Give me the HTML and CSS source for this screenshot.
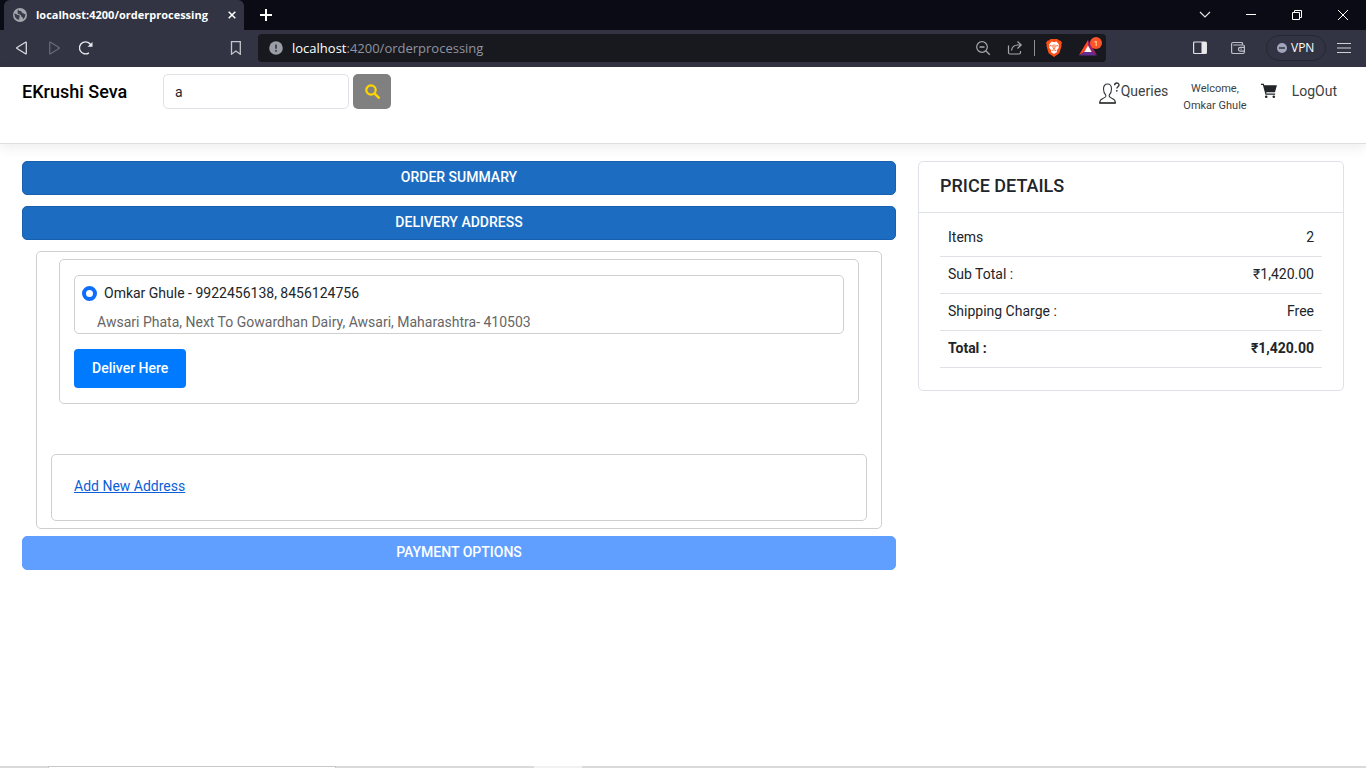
FILE: index.html
```html
<!DOCTYPE html>
<html lang="en">
<head>
<meta charset="utf-8">
<title>localhost:4200/orderprocessing</title>
<link rel="stylesheet" href="styles.css">
</head>
<body>
<div class="browser">
  <div class="tabstrip">
    <div class="tab">
      <svg class="tab-icon" width="14" height="14" viewBox="0 0 14 14"><circle cx="7" cy="7" r="7" fill="#a4a6ad"/><path d="M1.5 5.5c1.8.2 2.500 1.300 3.800 1.500 1.500.2 1.800 1 1.200 2-.4.8 0 1.600-.4 2.800C3.200 11.500 1.200 9 1.500 5.500zM5.500 1.500c.1 1.300 1 1.500 2.200 1.600 1.200.2.600 1.700 1.900 1.900 1 .1 1.200 1.200 2.800 1 .2 2-.8 4-2.400 5.300.2-1.500-.5-1.900-1.400-2.500-.8-.700-.3-2-1.600-2.300C5.600 6.200 4 5.500 4.600 4.200 5 3.500 3.800 3 5.500 1.500z" fill="#3a3c4a"/></svg>
      <span class="tab-title">localhost:4200/orderprocessing</span>
      <button class="icon-btn" aria-label="Close tab"><svg width="8" height="8" viewBox="0 0 8 8"><path d="M.7.7l6.600 6.600M7.300.7L.7 7.300" stroke="#fff" stroke-width="1.500"/></svg></button>
    </div>
    <button class="icon-btn new-tab" aria-label="New tab"><svg width="12" height="12" viewBox="0 0 12 12"><path d="M6 0v12M0 6h12" stroke="#fff" stroke-width="2"/></svg></button>
    <div class="window-controls">
      <button class="icon-btn" aria-label="Search tabs"><svg width="12" height="12" viewBox="0 0 12 12"><path d="M1 3l5 5 5-5" fill="none" stroke="#e4e4e4" stroke-width="1.200"/></svg></button>
      <button class="icon-btn" aria-label="Minimize"><svg width="12" height="12" viewBox="0 0 12 12"><path d="M1 5.500h10" stroke="#fff"/></svg></button>
      <button class="icon-btn" aria-label="Restore"><svg width="12" height="12" viewBox="0 0 12 12"><path d="M1.500 3.500h7v7h-7zM3.500 3V1.500h7v7H9" fill="none" stroke="#fff"/></svg></button>
      <button class="icon-btn" aria-label="Close"><svg width="12" height="12" viewBox="0 0 12 12"><path d="M1 1l10 10M11 1L1 11" stroke="#fff"/></svg></button>
    </div>
  </div>
  <div class="toolbar">
    <div class="nav">
      <button class="icon-btn" aria-label="Back"><svg width="14" height="14" viewBox="0 0 14 14"><path d="M11.300 1.700v10.600q0 .9-.8.400L2 7.500q-.8-.5 0-1l8.500-5.200q.8-.5.800.4z" fill="none" stroke="#d8d9de" stroke-width="1.300"/></svg></button>
      <button class="icon-btn" aria-label="Forward"><svg width="14" height="14" viewBox="0 0 14 14"><path d="M2.700 1.700v10.600q0 .9.800.4L12 7.500q.8-.5 0-1L3.500 1.300q-.8-.5-.8.4z" fill="none" stroke="#6a6c7a" stroke-width="1.200"/></svg></button>
      <button class="icon-btn" aria-label="Reload"><svg width="14" height="14" viewBox="0 0 14 14"><path d="M9.900 11.800A6 6 0 1 1 12.200 5" fill="none" stroke="#e8e8ec" stroke-width="1.400"/><path d="M8.500 5.800h5V1z" fill="#e8e8ec"/></svg></button>
    </div>
    <button class="icon-btn bookmark" aria-label="Bookmark"><svg width="12" height="14" viewBox="0 0 12 14"><path d="M1.500.700h8.800v12.500L5.900 10l-4.400 3.200z" fill="none" stroke="#c4c5cc" stroke-width="1.300"/></svg></button>
    <div class="address-bar">
      <svg width="14" height="14" viewBox="0 0 14 14"><circle cx="7" cy="7" r="6.800" fill="#9a9da6"/><path d="M7 3.500v4.200M7 9v1.700" stroke="#34363f" stroke-width="1.600"/></svg>
      <span class="url"><span class="host">localhost</span>:4200/orderprocessing</span>
      <button class="icon-btn zoom" aria-label="Zoom"><svg width="16" height="16" viewBox="0 0 16 16"><circle cx="7" cy="7" r="5.300" fill="none" stroke="#a5a7ae" stroke-width="1.200"/><path d="M4.500 7h5M11 11l3.800 3.800" stroke="#a5a7ae" stroke-width="1.300"/></svg></button>
      <button class="icon-btn share" aria-label="Share"><svg width="16" height="16" viewBox="0 0 16 16"><path d="M1.500 5.500v7q0 1.500 1.500 1.500h9q1.500 0 1.500-1.500V11M4.500 10.500C5 6.500 7 5 11 5h3M10.500 1.500L14.200 5l-3.700 3.500" fill="none" stroke="#a5a7ae" stroke-width="1.200"/></svg></button>
      <span class="divider"></span>
      <button class="icon-btn" aria-label="Brave Shields"><svg width="16" height="18" viewBox="0 0 16 18"><path d="M4.500 0h7L13 1.600l1.300-.2L16 3.700 15.300 5.800l.2 1.400-2.200 7L8 18l-5.300-3.800-2.200-7 .2-1.400L0 3.700l1.700-2.300 1.300.2z" fill="#fb4f15"/><path d="M8 3.300l2.500-.7 2.500 3.200-.5 1.400.4 1.300-2 2.700.2 1.700L8 15l-3.100-2.100.2-1.700-2-2.700.4-1.300L3 5.800l2.500-3.200z" fill="#fff"/><path d="M4 6.500l2.600.7M12 6.500l-2.600.7M7.200 5.500L7 9.200l1 .8 1-.8-.2-3.700M5.700 11.700L8 10.800l2.300.9" fill="none" stroke="#fb4f15" stroke-width=".8"/></svg></button>
      <button class="icon-btn rewards" aria-label="Brave Rewards"><svg width="18" height="16" viewBox="0 0 18 16"><path d="M9 0v6l-3.300 6L0 15z" fill="#ff4724"/><path d="M9 0l9 15-5.700-3L9 6z" fill="#9e1f63"/><path d="M0 15.500L5.700 11.500h6.600l5.700 4z" fill="#662d91"/><path d="M9 5.500l3.700 6.500H5.300z" fill="#fff"/></svg><span class="badge">1</span></button>
    </div>
    <div class="tools">
      <button class="icon-btn" aria-label="Sidebar"><svg width="14" height="14" viewBox="0 0 14 14"><rect x=".6" y="1" width="12.800" height="11.500" rx="1" fill="none" stroke="#e2e2e6" stroke-width="1.200"/><path d="M8.500 1H13v11.500H8.500z" fill="#e9e9ec"/></svg></button>
      <button class="icon-btn wallet" aria-label="Wallet"><svg width="14" height="14" viewBox="0 0 14 14"><path d="M11.500 4V2.500q0-1-1-1H2q-1.400 0-1.400 1.400v8q0 1.600 1.600 1.600h9.700q1.500 0 1.500-1.500V5.500Q13.400 4 12 4H2.200M13.400 6.300H9.500q-2 0-2 1.900t2 1.900h3.900M9.500 8.200h1.200" fill="none" stroke="#bfc0c7" stroke-width="1.200"/></svg></button>
      <button class="vpn"><svg width="10" height="10" viewBox="0 0 10 10"><circle cx="5" cy="5" r="5" fill="#a1a4ba"/><path d="M2 5h6" stroke="#323443" stroke-width="1.500"/></svg>VPN</button>
      <button class="icon-btn" aria-label="Menu"><svg width="14" height="12" viewBox="0 0 14 12"><path d="M0 1.500h14M0 6h14M0 10.500h14" stroke="#d1d2d7" stroke-width="1.200"/></svg></button>
    </div>
  </div>
</div>

<header class="site-header">
  <a class="brand" href="#">EKrushi Seva</a>
  <form class="search">
    <input class="search-input" type="text" value="a" aria-label="Search">
    <button class="search-btn" type="button" aria-label="Search"><svg width="15" height="15" viewBox="0 0 15 15"><circle cx="6" cy="6" r="4.700" fill="none" stroke="#ffd500" stroke-width="2.200"/><path d="M9.400 9.400l4.300 4.300" stroke="#ffd500" stroke-width="2.500" stroke-linecap="round"/></svg></button>
  </form>
  <nav class="user-nav">
    <a class="queries" href="#"><svg width="22" height="22" viewBox="0 0 22 22"><path d="M6.800 13.200C5.200 11.500 4.500 9.500 4.500 7c0-3.200 1.500-5 4-5s4 1.800 4 5c0 2.500-.7 4.500-2.300 6.200-.5 2 .6 2.400 3 3.200 2.300.8 3.100 1.600 3.300 4.600H.6c.2-3 1-3.800 3.300-4.600 2.400-.8 3.400-1.200 2.900-3.200z" fill="none" stroke="#35383b" stroke-width="1.100"/><path d="M.5 21h16" stroke="#222" stroke-width="1.300"/><path d="M15.600 3.200C15.700.3 20 .4 20 3c0 1.800-2.200 1.700-2.200 3.600" fill="none" stroke="#35383b" stroke-width="1.400"/><circle cx="17.800" cy="8.800" r=".9" fill="#35383b"/></svg>Queries</a>
    <span class="welcome">Welcome,<br>Omkar Ghule</span>
    <a class="cart" href="#" aria-label="Cart"><svg width="16" height="16" viewBox="0 0 16 16"><path d="M0 .7h2.800l.5 1.600h12.600L14 9.300H5.200l.3 1.200h8.600v1.300H4.500L1.900 2H0z" fill="#212529"/><circle cx="5.200" cy="13.800" r="1.300" fill="#212529"/><circle cx="12.800" cy="13.800" r="1.300" fill="#212529"/></svg></a>
    <a class="logout" href="#">LogOut</a>
  </nav>
</header>

<main class="page">
  <section class="steps">
    <button class="step">ORDER SUMMARY</button>
    <button class="step">DELIVERY ADDRESS</button>
    <div class="panel delivery">
      <div class="panel address-card">
        <div class="panel address">
          <label class="address-name"><input class="radio" type="radio" name="address" checked>Omkar Ghule - 9922456138, 8456124756</label>
          <p class="address-line">Awsari Phata, Next To Gowardhan Dairy, Awsari, Maharashtra- 410503</p>
        </div>
        <button class="deliver">Deliver Here</button>
      </div>
      <div class="panel new-address"><a href="#">Add New Address</a></div>
    </div>
    <button class="step payment" disabled>PAYMENT OPTIONS</button>
  </section>
  <aside class="summary">
    <div class="price-card">
      <h2 class="price-title">PRICE DETAILS</h2>
      <div class="price-body">
        <table class="price-table">
          <tbody>
            <tr><td>Items</td><td>2</td></tr>
            <tr><td>Sub Total :</td><td>₹1,420.00</td></tr>
            <tr><td>Shipping Charge :</td><td>Free</td></tr>
            <tr class="total"><td>Total :</td><td>₹1,420.00</td></tr>
          </tbody>
        </table>
      </div>
    </div>
  </aside>
</main>
<footer class="taskbar"><span class="task-search"></span><span class="task-active"></span></footer>
</body>
</html>
```
FILE: styles.css
```css
* { box-sizing: border-box; }

body {
  margin: 0;
  min-height: 100vh;
  display: flex;
  flex-direction: column;
  background: #fff;
  color: #212529;
  font: 14px/22px Roboto, "Liberation Sans", sans-serif;
}

button, input { font: inherit; }
button { cursor: pointer; }
a { color: inherit; text-decoration: none; }
svg { display: block; flex: none; }

/* Browser frame */
.browser { color: #fff; font: 12px/16px "Open Sans", "Noto Sans", sans-serif; }

.icon-btn {
  position: relative;
  display: flex;
  padding: 0;
  border: 0;
  background: none;
}

.tabstrip {
  display: flex;
  align-items: center;
  height: 30px;
  padding-left: 4px;
  background: #0b0b15;
}

.tab {
  display: flex;
  align-items: center;
  width: 240px;
  height: 30px;
  padding: 0 8px 0 9px;
  border-radius: 6px 6px 0 0;
  background: #323443;
}

.tab-title {
  flex: 1;
  margin-left: 9px;
  white-space: nowrap;
  font-size: 11px;
  font-weight: 700;
}

.new-tab { margin-left: 16px; }

.window-controls {
  display: flex;
  gap: 34px;
  margin-left: auto;
  padding-right: 17px;
}

.toolbar {
  display: flex;
  align-items: center;
  height: 37px;
  padding: 0 15px 1px;
  background: #323443;
}

.nav { display: flex; gap: 18px; }
.bookmark { margin-left: 137px; }

.address-bar {
  display: flex;
  flex: 1;
  align-items: center;
  height: 28px;
  margin-left: 16px;
  padding: 0 9px 0 11px;
  border-radius: 4px;
  background: #17191f;
}

.url {
  flex: 1;
  margin-left: 9px;
  color: #9193a0;
  font-size: 13px;
}

.host { color: #fff; }
.share { margin-left: 16px; }

.divider {
  width: 1px;
  height: 16px;
  margin: 0 11px;
  background: #8d8f96;
}

.rewards { margin-left: 17px; }

.badge {
  position: absolute;
  top: -3px;
  right: -5px;
  width: 12px;
  height: 12px;
  border-radius: 50%;
  background: #fb542b;
  color: #fff;
  font-size: 8px;
  line-height: 12px;
  text-align: center;
}

.tools { display: flex; align-items: center; margin-left: 87px; }
.wallet { margin-left: 24px; }

.vpn {
  display: flex;
  align-items: center;
  gap: 4px;
  width: 60px;
  height: 26px;
  margin: 0 11px 0 21px;
  padding: 0 10px;
  border: 1px solid #252733;
  border-radius: 13px;
  background: none;
  color: #fff;
  font-size: 12px;
}

/* Site header */
.site-header {
  display: flex;
  align-items: flex-start;
  height: 77px;
  padding: 7px 29px 0 22px;
  border-bottom: 1px solid #dedede;
  box-shadow: 0 4px 12px rgba(0, 0, 0, .07);
}

.brand {
  width: 141px;
  color: #000;
  font-size: 18px;
  font-weight: 500;
  line-height: 35px;
}

.search { display: flex; gap: 4px; }

.search-input {
  width: 186px;
  height: 35px;
  padding: 0 11px;
  border: 1px solid #dee2e6;
  border-radius: 5px;
  background: #fff;
  color: #212529;
}

.search-btn {
  display: grid;
  place-items: center;
  width: 38px;
  height: 35px;
  padding: 0 0 1px;
  border: 0;
  border-radius: 5px;
  background: #808080;
}

.user-nav {
  display: flex;
  align-items: flex-start;
  margin-left: auto;
  color: #3c3f43;
  line-height: 34px;
}

.queries { display: flex; align-items: center; }

.queries svg { margin-top: 3px; }

.welcome {
  margin: 6px 14px 0 15px;
  font-size: 11px;
  line-height: 17px;
  text-align: center;
}

.cart { padding-top: 9px; margin-right: 15px; }

/* Order page */
.page {
  display: grid;
  grid-template-columns: 2fr 1fr;
  flex: 1;
  align-items: start;
  padding: 17px 11px;
}

.steps, .summary { padding: 0 11px; }

.step {
  display: block;
  width: 100%;
  height: 34px;
  margin-bottom: 11px;
  padding: 0 0 2px;
  border: 1px solid #185fae;
  border-radius: 5px;
  background: #1c6dc1;
  color: #fff;
  font-weight: 500;
}

.payment {
  margin-bottom: 0;
  border-color: #609fff;
  background: #609fff;
}

.panel { border: 1px solid #cfcfcf; border-radius: 5px; }
.delivery { margin: 0 14px 7px; padding: 7px 14px; }
.address-card { margin: 0 8px 50px; padding: 15px 14px; }
.address { margin-bottom: 15px; padding: 6px 7px 0; }
.address-name { display: flex; align-items: center; }

.radio {
  appearance: none;
  width: 15px;
  height: 15px;
  margin: 0 7px 0 0;
  border: 4px solid #0d6efd;
  border-radius: 50%;
  background: #fff;
}

.address-line { margin: 7px 0 0 15px; color: #666; }

.deliver {
  display: block;
  height: 39px;
  padding: 0 18px 2px;
  border: 0;
  border-radius: 4px;
  background: #007bff;
  color: #fff;
  font-weight: 500;
}

.new-address {
  padding: 20px 22px 23px;
  color: #0b5ed7;
}

.new-address a { text-decoration: underline; }

.price-card { border: 1px solid #dee2e6; border-radius: 5px; }

.price-title {
  margin: 0;
  padding: 13px 21px 15px;
  border-bottom: 1px solid #dee2e6;
  font-size: 18px;
  font-weight: 500;
  line-height: 22px;
}

.price-body { padding: 7px 21px 22px; }
.price-table { width: 100%; border-spacing: 0; }

.price-table td {
  height: 37px;
  padding: 0 8px 2px;
  border-bottom: 1px solid #dee2e6;
}

.price-table td:last-child { text-align: right; }
.total { font-weight: 700; }

/* Desktop edge */
.taskbar {
  display: flex;
  height: 2px;
  padding-left: 48px;
  background: #dadada;
}

.task-search {
  width: 288px;
  border: 1px solid #c8c8c8;
  border-bottom: 0;
  background: #fff;
}

.task-active { width: 48px; margin-left: 198px; background: #f1f1f1; }
```
